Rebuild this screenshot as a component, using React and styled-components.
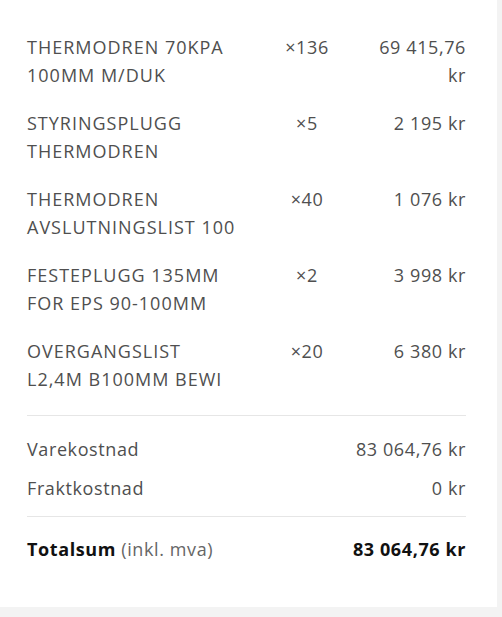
import React from 'react';
import styled, { createGlobalStyle } from 'styled-components';

const GlobalStyle = createGlobalStyle`
  html, body {
    margin: 0;
    padding: 0;
    background: #f3f3f3;
  }
  body {
    font-family: "Open Sans", "Noto Sans", "Liberation Sans", sans-serif;
  }
`;

const Card = styled.div`
  width: 497px;
  height: 607px;
  box-sizing: border-box;
  background: #fff;
  padding: 33px 31px 0 27px;
`;

const Lines = styled.div`
  display: flex;
  flex-direction: column;
  gap: 20px;
  padding-bottom: 22px;
`;

const Line = styled.div`
  display: grid;
  grid-template-columns: 211px 1fr 90px;
  font-size: 18px;
  line-height: 28px;
  letter-spacing: 0.6px;
  color: #4f4f4f;
`;

const Name = styled.div`
  text-transform: uppercase;
  letter-spacing: 1px;
`;

const Qty = styled.div`
  text-align: center;
`;

const Price = styled.div`
  text-align: right;
`;

const Divider = styled.hr`
  border: none;
  border-top: 1px solid #e6e6e6;
  margin: 0;
`;

const Summary = styled.div`
  display: flex;
  flex-direction: column;
  gap: 11px;
  padding: ${p => (p.$total ? '18px 0 0' : '19px 0 14px')};
`;

const SumRow = styled.div`
  display: flex;
  justify-content: space-between;
  font-size: 18px;
  line-height: 28px;
  letter-spacing: 0.6px;
  color: ${p => (p.$total ? '#111' : '#4f4f4f')};
  font-weight: ${p => (p.$total ? 700 : 400)};
`;

const Muted = styled.span`
  font-weight: 400;
  color: #666;
`;

const items = [
  { name: 'Thermodren 70KPA 100MM M/DUK', qty: 136, price: '69 415,76 kr' },
  { name: 'Styringsplugg Thermodren', qty: 5, price: '2 195 kr' },
  { name: 'Thermodren avslutningslist 100', qty: 40, price: '1 076 kr' },
  { name: 'Festeplugg 135MM for EPS 90-100MM', qty: 2, price: '3 998 kr' },
  { name: 'Overgangslist L2,4M B100MM BEWI', qty: 20, price: '6 380 kr' },
];

export default function App() {
  return (
    <>
      <GlobalStyle />
      <Card>
        <Lines>
          {items.map(it => (
            <Line key={it.name}>
              <Name>{it.name}</Name>
              <Qty>×{it.qty}</Qty>
              <Price>{it.price}</Price>
            </Line>
          ))}
        </Lines>
        <Divider />
        <Summary>
          <SumRow>
            <span>Varekostnad</span>
            <span>83 064,76 kr</span>
          </SumRow>
          <SumRow>
            <span>Fraktkostnad</span>
            <span>0 kr</span>
          </SumRow>
        </Summary>
        <Divider />
        <Summary $total>
          <SumRow $total>
            <span>
              Totalsum <Muted>(inkl. mva)</Muted>
            </span>
            <span>83 064,76 kr</span>
          </SumRow>
        </Summary>
      </Card>
    </>
  );
}
